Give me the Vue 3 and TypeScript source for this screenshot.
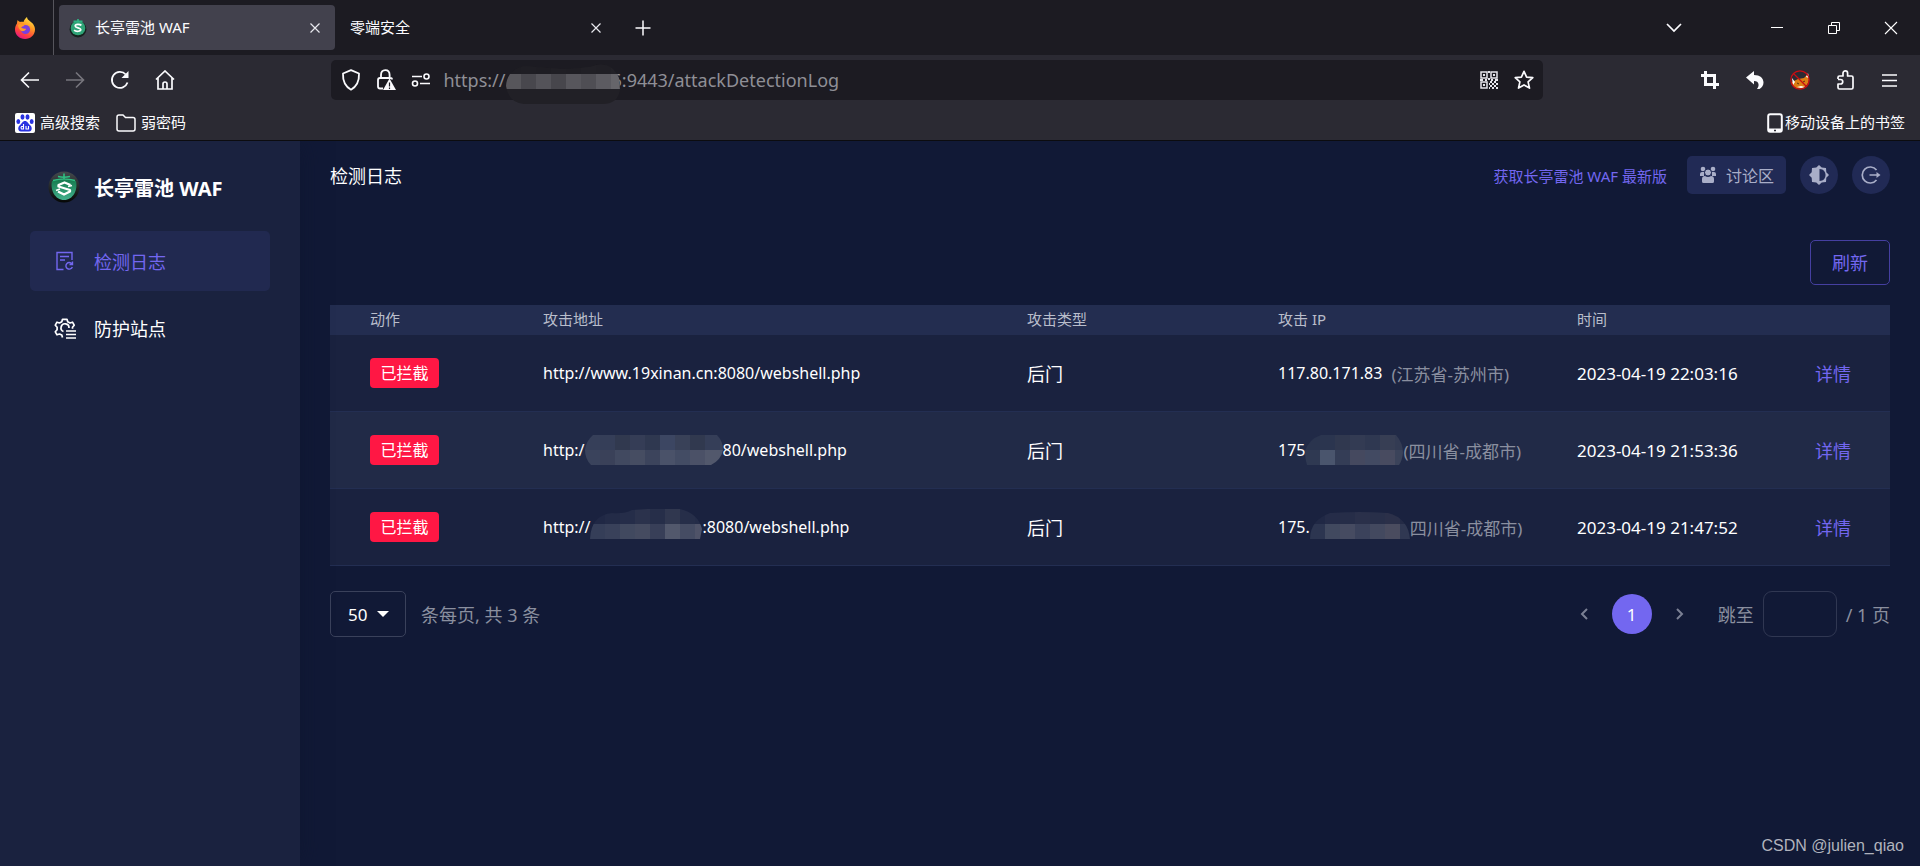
<script setup lang="ts">
import { ref } from 'vue'

interface Mosaic {
  width: number
  height: number
  clip: string
  split: number
  upper: string[]
  lower: string[]
}

interface LogRow {
  id: number
  urlHead: string
  urlMask?: Mosaic
  urlTail: string
  kind: string
  ipHead: string
  ipMask?: Mosaic
  region: string
  time: string
}

const addressMask: Mosaic = {
  width: 114, height: 40, split: 10,
  clip: 'M0 22 Q1 6 18 2 L56 5 Q84 4 90 1 Q106 -2 113 14 L114 26 Q112 40 96 40 H18 Q2 38 0 22Z',
  upper: ['#1e1d23', '#1f1e24', '#1e1d23', '#201f25', '#1f1e24', '#212026', '#201f25', '#222127'],
  lower: ['#57565b', '#48474d', '#545359', '#47464c', '#57565c', '#4f4e54', '#5c5b61', '#66656a'],
}

const rows: LogRow[] = [
  {
    id: 1,
    urlHead: 'http://www.19xinan.cn:8080/webshell.php',
    urlTail: '',
    kind: '后门',
    ipHead: '117.80.171.83',
    region: '(江苏省-苏州市)',
    time: '2023-04-19 22:03:16',
  },
  {
    id: 2,
    urlHead: 'http:/',
    urlMask: {
      width: 138, height: 30, split: 15,
      clip: 'M8 0 H132 Q138 6 138 15 Q136 25 126 30 H6 Q0 24 0 15 Q1 6 8 0Z',
      upper: ['#363f59', '#353e58', '#31394f', '#353d56', '#2f3850', '#3c4662', '#394158', '#31394f', '#353e58', '#3a4259'],
      lower: ['#3a435c', '#3a4159', '#414960', '#464d62', '#3c445c', '#4a5269', '#434c64', '#4b5167', '#52586c', '#4e566c'],
    },
    urlTail: '80/webshell.php',
    kind: '后门',
    ipHead: '175',
    ipMask: {
      width: 98, height: 30, split: 15,
      clip: 'M16 0 H91 Q98 8 98 18 Q97 26 94 30 H2 Q0 24 0 16 Q4 4 16 0Z',
      upper: ['#2a344e', '#2b354f', '#30384f', '#333b53', '#2f3851', '#373e54', '#333b53'],
      lower: ['#2f3952', '#4a556d', '#343d56', '#45495f', '#424a62', '#484b60', '#3b435a'],
    },
    region: '(四川省-成都市)',
    time: '2023-04-19 21:53:36',
  },
  {
    id: 3,
    urlHead: 'http://',
    urlMask: {
      width: 112, height: 36, split: 15,
      clip: 'M0 30 Q1 6 22 4 Q34 5 42 1 Q66 -1 90 0 Q108 4 112 20 L110 30Z',
      upper: ['#202845', '#232b47', '#252d49', '#2b324c', '#262e49', '#30374f', '#262e49', '#242c48'],
      lower: ['#353e58', '#39415a', '#41495f', '#454b60', '#383f58', '#52586c', '#454c63', '#4f5368'],
    },
    urlTail: ':8080/webshell.php',
    kind: '后门',
    ipHead: '175.',
    ipMask: {
      width: 100, height: 30, split: 12,
      clip: 'M0 27 Q0 8 20 1 Q50 -1 78 1 Q98 6 100 27Z',
      upper: ['#202845', '#252c48', '#262d48', '#2a304a', '#282f49', '#2b3049', '#242b46'],
      lower: ['#2c3550', '#41495f', '#464b61', '#3b425b', '#43495f', '#4a4c5f', '#303852'],
    },
    region: '四川省-成都市)',
    time: '2023-04-19 21:47:52',
  },
]

const address = ref('')
const pageSize = ref('50')
const jump = ref('')
</script>

<template>
  <div class="window">
    <header class="browser">
      <div class="tabs">
        <div class="brand">
          <svg width="22" height="22" viewBox="0 0 22 22">
            <defs>
              <linearGradient id="fx" x1="0.8" y1="0" x2="0.3" y2="1">
                <stop offset="0" stop-color="#fff14d" /><stop offset="0.4" stop-color="#ff9a24" />
                <stop offset="0.75" stop-color="#ff4040" /><stop offset="1" stop-color="#e31587" />
              </linearGradient>
            </defs>
            <path d="M13 0c0 2 1.500 3 3 4.200C18.500 6 21 8.500 21 12.500 21 18 16.500 22 11 22S1 18 1 12.500c0-2.500.8-4.500 2-6 0-1.200.2-2.300.7-3.500C4.500 4 5 4.500 6 5c1.200-.4 2.500-.3 3.500 0C10 3 11.500 1 13 0z" fill="url(#fx)" />
            <circle cx="11.500" cy="12.500" r="4.600" fill="#7a3fe0" />
            <path d="M4 8c2-2 5-1 6.500 1-2 0-3 .8-3.500 2 2-.5 2.500 1 5 .8 0 2-3 2.700-4.500 2.200C5.500 13 4 10.500 4 8z" fill="#ff9b2b" />
          </svg>
        </div>
        <div class="tab active">
          <svg class="favicon" width="18" height="20" viewBox="0 0 32 34">
            <circle cx="16" cy="19" r="15" fill="#16211e" /><circle cx="16" cy="17" r="13" fill="#2fa377" />
            <path d="M8 5h16M16 1v6" stroke="#2fb583" stroke-width="3" />
            <path d="M22 12.500c-3-3-11-2.500-11 .8s10 3.500 10 6.500-8 4.500-12 1" fill="none" stroke="#fff" stroke-width="3" />
          </svg>
          <span class="tab-title">长亭雷池 WAF</span>
          <button class="tab-close" aria-label="关闭标签页"><svg width="10" height="10" viewBox="0 0 10 10"><path d="M.5.5l9 9m0-9l-9 9" stroke="#e8e8ee" stroke-width="1.200" /></svg></button>
        </div>
        <div class="tab">
          <span class="tab-title">零端安全</span>
          <button class="tab-close" aria-label="关闭标签页"><svg width="10" height="10" viewBox="0 0 10 10"><path d="M.5.5l9 9m0-9l-9 9" stroke="#e8e8ee" stroke-width="1.200" /></svg></button>
        </div>
        <button class="new-tab" aria-label="新标签页"><svg width="16" height="16" viewBox="0 0 16 16"><path d="M8 .5v15M.5 8h15" stroke="#fbfbfe" stroke-width="1.500" /></svg></button>
        <div class="window-controls">
          <button class="list-tabs" aria-label="列出标签页"><svg width="16" height="10" viewBox="0 0 16 10"><path d="M1 1l7 7 7-7" fill="none" stroke="#fbfbfe" stroke-width="1.700" /></svg></button>
          <button aria-label="最小化"><svg width="12" height="12" viewBox="0 0 12 12"><path d="M0 5.500h12" stroke="#fff" /></svg></button>
          <button aria-label="还原"><svg width="12" height="12" viewBox="0 0 12 12"><path d="M.5 3.500h8v8h-8zM3.500 3V.5h8v8H9" fill="none" stroke="#fff" /></svg></button>
          <button aria-label="关闭"><svg width="14" height="14" viewBox="0 0 14 14"><path d="M1 1l12 12m0-12L1 13" stroke="#fff" stroke-width="1.100" /></svg></button>
        </div>
      </div>

      <div class="toolbar">
        <button class="tool" aria-label="后退"><svg width="20" height="18" viewBox="0 0 20 18"><path d="M19 9H2M9 1.500L1.500 9 9 16.500" fill="none" stroke="#fbfbfe" stroke-width="1.600" /></svg></button>
        <button class="tool" aria-label="前进"><svg width="20" height="18" viewBox="0 0 20 18"><path d="M1 9h17M11 1.500L18.500 9 11 16.500" fill="none" stroke="#77767d" stroke-width="1.600" /></svg></button>
        <button class="tool" aria-label="刷新页面"><svg width="20" height="20" viewBox="0 0 20 20"><path d="M17.500 12.500A8 8 0 1 1 15.800 4.500" fill="none" stroke="#fbfbfe" stroke-width="1.800" /><path d="M18.500 1v7h-7z" fill="#fbfbfe" /></svg></button>
        <button class="tool" aria-label="主页"><svg width="20" height="20" viewBox="0 0 20 20"><path d="M1 9.500L10 1l9 8.500M3 8v11h14V8M8 19v-5q0-2 2-2t2 2v5" fill="none" stroke="#fbfbfe" stroke-width="1.700" /></svg></button>
        <div class="spacer"></div>
        <div class="address">
          <div class="address-icons">
            <svg width="20" height="22" viewBox="0 0 20 22"><path d="M10 1.200l8 3.300c.3 7-1.500 12.500-8 16.200C3.500 17 1.700 11.500 2 4.500z" fill="none" stroke="#fbfbfe" stroke-width="1.800" stroke-linejoin="round" /></svg>
            <svg width="20" height="22" viewBox="0 0 20 22"><path d="M5 9V6q0-4.800 4.300-4.800T13.600 6v3M7 19.500H4q-2 0-2-2V11q0-2 2-2h10q2 0 2 1.500" fill="none" stroke="#fbfbfe" stroke-width="1.800" /><path d="M13.500 9.500L20 21H7z" fill="#fbfbfe" /><path d="M13.500 13.500v4m0 1v1.500" stroke="#1c1b22" stroke-width="1.200" /></svg>
            <svg width="20" height="14" viewBox="0 0 20 14"><path d="M1 3.500h10M9 10.500h10" stroke="#fbfbfe" stroke-width="1.700" /><circle cx="15.500" cy="3.500" r="2.500" fill="none" stroke="#fbfbfe" stroke-width="1.600" /><circle cx="4" cy="10.500" r="2.500" fill="none" stroke="#fbfbfe" stroke-width="1.600" /></svg>
          </div>
          <div class="address-text">
            <span>https://</span>
            <svg class="address-mask" :width="addressMask.width" :height="addressMask.height">
              <clipPath id="mask-address"><path :d="addressMask.clip" /></clipPath>
              <g clip-path="url(#mask-address)">
                <rect width="114" height="40" fill="#212026" />
                <rect v-for="(c, i) in addressMask.upper" :key="'u' + i" :x="i * 15" y="0" width="15" :height="addressMask.split" :fill="c" />
                <rect v-for="(c, i) in addressMask.lower" :key="'l' + i" :x="i * 15" :y="addressMask.split" width="15" height="15" :fill="c" />
              </g>
            </svg>
            <span class="address-tail">6:9443/attackDetectionLog</span>
            <input v-model="address" class="address-input" aria-label="地址" />
          </div>
          <svg width="18" height="18" viewBox="0 0 18 18" fill="none" stroke="#e4e4ea" stroke-width="1.500"><path d="M1 1h6v6H1zM11 1h6v6h-6zM1 11h6v6H1z" /><path d="M3 4h2M13 4h2M3 14h2M9 0v2M8 8h2M0 9h3M5 9h2M11 9h2M15 9h3M10 11h2M14 11h2M9 13h1M12 13h2M16 13h2M10 15h2M14 15h2M9 17h1M12 17h2M16 17h2" stroke-width="2" /></svg>
          <svg width="20" height="20" viewBox="0 0 20 20"><path d="M10 1.300l2.600 5.800 6.200.6-4.700 4.200 1.400 6.200L10 14.900l-5.500 3.200 1.400-6.200L1.200 7.700l6.200-.6z" fill="none" stroke="#fbfbfe" stroke-width="1.700" stroke-linejoin="round" /></svg>
        </div>
        <div class="spacer"></div>
        <button class="tool" aria-label="截图"><svg width="18" height="18" viewBox="0 0 18 18"><path d="M4.500 0v13.500H18M0 4.500h13.500V18" fill="none" stroke="#fbfbfe" stroke-width="3" /></svg></button>
        <button class="tool" aria-label="撤销"><svg width="18" height="18" viewBox="0 0 18 18"><path d="M0 6.500L8 0v4c6 0 9.500 3 9.500 7.500 0 3-1.500 5-4 6.500H11c2.500-3 2.500-8-3-8v3.500z" fill="#fbfbfe" /></svg></button>
        <button class="tool" aria-label="扩展已停用"><svg width="20" height="20" viewBox="0 0 20 20"><path d="M2 12c0 4 3 6.500 8 6.500s9-4 9-11.500l-1-3-4 4-6 1z" fill="#dd7d14" /><path d="M2 8l3 4-2 3zM18 3l1 5-3-1zM7 17l4-1 4 1-4 1z" fill="#fff" /><path d="M7 13l2 1m4-2l2-1" stroke="#5b3210" /><circle cx="10" cy="10" r="9.200" fill="none" stroke="#c80d13" stroke-width="1.300" /><path d="M3.500 3.500l13 13" stroke="#c80d13" stroke-width="1.300" /></svg></button>
        <button class="tool" aria-label="扩展"><svg width="20" height="20" viewBox="0 0 20 20"><path d="M3 9V7.500Q3 6 4.500 6H8V3.200a2.300 2.300 0 0 1 4.600 0V6h3.900Q18 6 18 7.500v10q0 1.500-1.500 1.500h-12Q3 19 3 17.500V14h2.500a2 2 0 0 0 0-4.500H3" fill="none" stroke="#fbfbfe" stroke-width="1.700" stroke-linejoin="round" /></svg></button>
        <button class="tool" aria-label="菜单"><svg width="15" height="13" viewBox="0 0 15 13"><path d="M0 1h15M0 6.500h15M0 12h15" stroke="#fbfbfe" stroke-width="1.400" /></svg></button>
      </div>

      <nav class="bookmarks">
        <a href="#" class="bookmark">
          <svg width="20" height="20" viewBox="0 0 20 20"><rect width="20" height="20" rx="2" fill="#fff" /><g fill="#2932e1"><ellipse cx="7.500" cy="4" rx="2" ry="2.700" /><ellipse cx="12.500" cy="4" rx="2" ry="2.700" /><ellipse cx="3.300" cy="8.500" rx="1.900" ry="2.500" /><ellipse cx="16.700" cy="8.500" rx="1.900" ry="2.500" /><path d="M10 8c2.500 0 3 2.500 5 4s3 6-1 6.500H6c-4-.5-3-5-1-6.500s2.500-4 5-4z" /></g><path d="M8.500 11v5H6.500q-1-1.200 0-2.500h2M11 13v3h2.500v-3" fill="none" stroke="#fff" stroke-width="1.100" /></svg>
          <span>高级搜索</span>
        </a>
        <a href="#" class="bookmark">
          <svg width="20" height="18" viewBox="0 0 20 18"><path d="M1 3q0-2 2-2h4l2.500 2.500H17q2 0 2 2V15q0 2-2 2H3q-2 0-2-2z" fill="none" stroke="#fbfbfe" stroke-width="1.500" /></svg>
          <span>弱密码</span>
        </a>
        <a href="#" class="bookmark mobile">
          <svg width="16" height="20" viewBox="0 0 16 20"><rect x="1.200" y="1.200" width="13.600" height="17.600" rx="2" fill="none" stroke="#fbfbfe" stroke-width="2" /><path d="M2 17h12" stroke="#fbfbfe" stroke-width="3" /><path d="M7 17.500h2" stroke="#2b2a33" stroke-width="1.500" /></svg>
          <span>移动设备上的书签</span>
        </a>
      </nav>
    </header>

    <div class="app">
      <aside class="sidebar">
        <div class="logo">
          <svg width="32" height="32" viewBox="0 0 32 32">
            <defs>
              <linearGradient id="lg" x1="0" y1="0" x2="0" y2="1"><stop offset="0" stop-color="#444a4d" /><stop offset="1" stop-color="#050706" /></linearGradient>
              <linearGradient id="lg2" x1="0" y1="0" x2="0" y2="1"><stop offset="0" stop-color="#167a4d" /><stop offset="1" stop-color="#42b08d" /></linearGradient>
            </defs>
            <circle cx="16" cy="16" r="15.500" fill="url(#lg)" />
            <path d="M4 10q12-3 24 0c2 9-3 19-12 19S2 19 4 10z" fill="url(#lg2)" />
            <path d="M10 5.500q6 1.500 12 0M16 2.500v6M5 9.500q11-3 22 0" fill="none" stroke="#2fc183" stroke-width="1.600" />
            <path d="M22.500 14l-6-2.500-6 2.500v1.500l11.500 3.500v1.500l-6 3-6-3" fill="none" stroke="#fff" stroke-width="2.300" stroke-linejoin="round" />
            <path d="M12 18l-4 1.500M20 15.500l4-1" stroke="#fff" stroke-width="1.500" />
          </svg>
          <strong>长亭雷池 WAF</strong>
        </div>
        <nav class="menu">
          <a href="#" class="menu-item current">
            <svg width="22" height="22" viewBox="0 0 22 22" fill="none" stroke="#7367f0" stroke-width="1.400"><path d="M9.500 19.500H3v-17h15v7.500M6 6.500h9M6 10h5" /><path d="M17.800 13.800a3.300 3.300 0 1 0 .5 3.200M18.500 11.500v3h-3" /></svg>
            <span>检测日志</span>
          </a>
          <a href="#" class="menu-item">
            <svg width="22" height="22" viewBox="0 0 22 22" fill="none" stroke="#fff" stroke-width="1.700"><path d="M8.500 20.500L7.800 18 5.500 17l-2.500.8-1.700-3 1.800-2v-2.600l-1.800-2 1.700-3 2.500.8 2.300-1.200.7-2.500h4.500l.7 2.500L16 6l2.500-.8 1.700 3-1.700 2v1.500" stroke-linejoin="round" /><path d="M9.500 14.500A4 4 0 1 1 15 11" /><path d="M12 14h10M12 17.500h10M12 21h10" /></svg>
            <span>防护站点</span>
          </a>
        </nav>
      </aside>

      <main class="content">
        <div class="topbar">
          <h1>检测日志</h1>
          <a href="#" class="latest">获取长亭雷池 WAF 最新版</a>
          <button class="forum">
            <svg width="18" height="18" viewBox="0 0 18 18" fill="#a9aec8"><circle cx="4" cy="3" r="2.300" /><circle cx="14" cy="3" r="2.300" /><path d="M1 10V8q0-2 2-2h2v4zM17 10V8q0-2-2-2h-2v4z" /><circle cx="9" cy="6.500" r="3.500" stroke="#212a55" /><path d="M3 15.500V13q0-3 3-3 3 2 6 0 3 0 3 3v2.500q0 1.500-1.500 1.500h-9Q3 17 3 15.500z" /></svg>
            <span>讨论区</span>
          </button>
          <button class="round" aria-label="切换主题"><svg width="20" height="20" viewBox="0 0 20 20"><path d="M10 0l2.700 2.500 4.300.5.300 4.200L20 10l-2.700 2.800-.3 4.200-4.300.5L10 20l-2.700-2.500L3 17l-.3-4.200L0 10l2.700-2.800L3 3l4.300-.5z" fill="#a9aec8" /><path d="M10.500 4c8 0 8 12 0 12z" fill="#212a55" /></svg></button>
          <button class="round" aria-label="退出登录"><svg width="20" height="20" viewBox="0 0 20 20"><path d="M15.500 5A8 8 0 1 0 15.500 15M8.500 10H17" fill="none" stroke="#a9aec8" stroke-width="1.700" /><path d="M15.500 7l4 3-4 3z" fill="#a9aec8" /></svg></button>
        </div>

        <div class="actions"><button class="refresh">刷新</button></div>

        <table class="log">
          <colgroup><col class="c-action" /><col /><col class="c-kind" /><col class="c-ip" /><col class="c-time" /><col class="c-detail" /></colgroup>
          <thead>
            <tr><th>动作</th><th>攻击地址</th><th>攻击类型</th><th>攻击 IP</th><th>时间</th><th></th></tr>
          </thead>
          <tbody>
            <tr v-for="row in rows" :key="row.id">
              <td><span class="badge">已拦截</span></td>
              <td>
                <div class="latin">
                  <span>{{ row.urlHead }}</span>
                  <svg v-if="row.urlMask" :width="row.urlMask.width" :height="row.urlMask.height">
                    <clipPath :id="'mask-url-' + row.id"><path :d="row.urlMask.clip" /></clipPath>
                    <g :clip-path="`url(#mask-url-${row.id})`">
                      <rect v-for="(c, i) in row.urlMask.upper" :key="'u' + i" :x="i * 15" y="0" width="15" :height="row.urlMask.split" :fill="c" />
                      <rect v-for="(c, i) in row.urlMask.lower" :key="'l' + i" :x="i * 15" :y="row.urlMask.split" width="15" height="15" :fill="c" />
                    </g>
                  </svg>
                  <span>{{ row.urlTail }}</span>
                </div>
              </td>
              <td>{{ row.kind }}</td>
              <td>
                <div class="latin">
                  <span>{{ row.ipHead }}</span>
                  <svg v-if="row.ipMask" :width="row.ipMask.width" :height="row.ipMask.height">
                    <clipPath :id="'mask-ip-' + row.id"><path :d="row.ipMask.clip" /></clipPath>
                    <g :clip-path="`url(#mask-ip-${row.id})`">
                      <rect v-for="(c, i) in row.ipMask.upper" :key="'u' + i" :x="i * 15" y="0" width="15" :height="row.ipMask.split" :fill="c" />
                      <rect v-for="(c, i) in row.ipMask.lower" :key="'l' + i" :x="i * 15" :y="row.ipMask.split" width="15" height="15" :fill="c" />
                    </g>
                  </svg>
                  <span class="region" :class="{ spaced: !row.ipMask }">{{ row.region }}</span>
                </div>
              </td>
              <td class="time">{{ row.time }}</td>
              <td><a href="#" class="detail">详情</a></td>
            </tr>
          </tbody>
        </table>

        <div class="paging">
          <label class="size">
            <select v-model="pageSize" aria-label="每页条数"><option>50</option></select>
            <svg width="12" height="6" viewBox="0 0 12 6"><path d="M0 0h12L6 6z" fill="#fff" /></svg>
          </label>
          <span class="total">条每页, 共 3 条</span>
          <button class="step" aria-label="上一页"><svg width="8" height="12" viewBox="0 0 8 12"><path d="M7 1L2 6l5 5" fill="none" stroke="#7b8094" stroke-width="2" /></svg></button>
          <button class="page">1</button>
          <button class="step" aria-label="下一页"><svg width="8" height="12" viewBox="0 0 8 12"><path d="M1 1l5 5-5 5" fill="none" stroke="#7b8094" stroke-width="2" /></svg></button>
          <label class="jump" for="jump">跳至</label>
          <input id="jump" v-model="jump" class="jump-input" />
          <span>/ 1 页</span>
        </div>
        <div class="watermark">CSDN @julien_qiao</div>
      </main>
    </div>
  </div>
</template>

<style>
body {
  margin: 0;
  background: #111936;
}
</style>

<style scoped>
* {
  box-sizing: border-box;
}
.window {
  display: flex;
  flex-direction: column;
  min-height: 100vh;
  font-family: "Noto Sans", "Noto Sans CJK SC", sans-serif;
  color: #fff;
}
button {
  border: 0;
  padding: 0;
  background: none;
  color: inherit;
  font: inherit;
  display: flex;
  align-items: center;
  justify-content: center;
}
a {
  color: inherit;
  text-decoration: none;
}
svg {
  flex: none;
}
.browser {
  position: relative;
  z-index: 2;
  background: #2b2a33;
  border-bottom: 1px solid #0c0c0f;
  font-size: 15px;
  line-height: 20px;
  color: #fbfbfe;
}
.tabs {
  display: flex;
  align-items: center;
  height: 55px;
  background: #1c1b22;
}
.brand {
  display: flex;
  align-items: center;
  justify-content: center;
  width: 54px;
  height: 55px;
  padding-right: 3px;
  border-right: 1px solid #56555c;
}
.tab {
  display: flex;
  align-items: center;
  width: 276px;
  height: 45px;
  margin-left: 5px;
  padding: 0 15px 0 10px;
  border-radius: 4px;
}
.tab.active {
  background: #42414d;
}
.favicon {
  margin-right: 8px;
}
.tab-title {
  flex: 1;
  padding-bottom: 2px;
  font-size: 15px;
}
.new-tab {
  width: 40px;
  height: 40px;
  margin-left: 7px;
}
.window-controls {
  display: flex;
  margin-left: auto;
  padding-right: 1px;
}
.window-controls button {
  width: 57px;
  height: 53px;
}
.window-controls .list-tabs {
  margin-right: 46px;
}
.toolbar {
  display: flex;
  align-items: center;
  height: 50px;
  padding: 0 8px 0 7px;
}
.tool {
  width: 45px;
  height: 40px;
}
.spacer {
  flex: 8;
}
.address {
  display: flex;
  flex: 66;
  align-items: center;
  gap: 16px;
  height: 40px;
  padding: 0 9px 0 10px;
  border-radius: 5px;
  background: #1c1b22;
}
.address-icons {
  display: flex;
  align-items: center;
  gap: 15px;
}
.address-text {
  display: flex;
  flex: 1;
  align-items: flex-start;
  height: 32px;
  margin-left: -4px;
  font-size: 18px;
  line-height: 32px;
  color: #8f8f96;
}
.address-mask {
  position: relative;
}
.address-tail {
  margin-left: -8px;
}
.address-input {
  flex: 1;
  min-width: 0;
  height: 32px;
  border: 0;
  background: none;
  color: inherit;
  outline: none;
}
.bookmarks {
  display: flex;
  align-items: center;
  gap: 16px;
  height: 35px;
  padding: 0 15px;
}
.bookmark {
  display: flex;
  align-items: center;
  gap: 5px;
}
.bookmark span {
  padding-bottom: 2px;
}
.mobile {
  gap: 2px;
  margin-left: auto;
}
.app {
  display: flex;
  flex: 1;
}
.sidebar {
  position: relative;
  z-index: 1;
  width: 300px;
  padding: 29px 30px;
  background: #1a223f;
  box-shadow: 0 0 24px #0f1731;
}
.logo {
  display: flex;
  align-items: center;
  gap: 14px;
  height: 34px;
  padding-left: 18px;
  font-size: 20px;
}
.menu {
  margin-top: 27px;
}
.menu-item {
  display: flex;
  align-items: center;
  gap: 18px;
  height: 60px;
  margin-bottom: 7px;
  padding-left: 24px;
  border-radius: 5px;
  font-size: 18px;
}
.current {
  background: #212950;
  color: #7367f0;
}
.content {
  display: flex;
  flex: 1;
  flex-direction: column;
  padding: 15px 30px 7px;
  background: #111936;
}
.topbar {
  display: flex;
  align-items: center;
  gap: 14px;
  height: 38px;
}
h1 {
  flex: 1;
  margin: 0;
  font-size: 18px;
  font-weight: 400;
}
.latest {
  margin-right: 6px;
  font-size: 15px;
  color: #7367f0;
}
.forum {
  gap: 9px;
  width: 99px;
  height: 38px;
  border-radius: 5px;
  background: #212a55;
  color: #a9aec8;
  font-size: 16px;
}
.round {
  width: 38px;
  height: 38px;
  border-radius: 50%;
  background: #212a55;
}
.actions {
  display: flex;
  justify-content: flex-end;
  margin: 46px 0 20px;
}
.refresh {
  width: 80px;
  height: 45px;
  padding-bottom: 1px;
  border: 1px solid #453fa0;
  border-radius: 5px;
  color: #7367f0;
  font-size: 18px;
}
.log {
  width: 100%;
  border-collapse: separate;
  border-spacing: 0;
  table-layout: fixed;
}
.c-action {
  width: 213px;
}
.c-kind {
  width: 251px;
}
.c-ip {
  width: 299px;
}
.c-time {
  width: 238px;
}
.c-detail {
  width: 75px;
}
th {
  height: 30px;
  padding: 0 0 2px;
  background: #232d50;
  color: #b9bdcb;
  font-size: 15px;
  font-weight: 400;
  line-height: 20px;
  text-align: left;
}
td {
  height: 77px;
  padding: 0;
  border-bottom: 1px solid #232e52;
  background: #1a223f;
  font-size: 18px;
  white-space: nowrap;
}
tr:nth-child(even) td {
  background: #212a47;
}
th:first-child,
td:first-child {
  padding-left: 40px;
}
.badge {
  display: inline-block;
  width: 69px;
  height: 30px;
  border-radius: 4px;
  background: #ff1744;
  font-size: 16px;
  line-height: 30px;
  text-align: center;
  vertical-align: middle;
}
.latin {
  display: flex;
  align-items: center;
  font-size: 16px;
}
.region {
  color: #8a8f9f;
  font-size: 17px;
}
.spaced {
  margin-left: 9px;
}
.time {
  font-size: 17px;
}
.detail {
  color: #7367f0;
}
.paging {
  display: flex;
  align-items: center;
  height: 46px;
  margin-top: 25px;
  color: #8a8f9f;
  font-size: 18px;
}
.size {
  position: relative;
  width: 76px;
  height: 46px;
  margin-right: 15px;
}
.size select {
  width: 100%;
  height: 100%;
  padding: 0 0 0 17px;
  border: 1px solid #3a415b;
  border-radius: 5px;
  appearance: none;
  background: none;
  color: #fff;
  font: inherit;
  font-size: 17px;
}
.size svg {
  position: absolute;
  top: 20px;
  right: 17px;
  pointer-events: none;
}
.total {
  flex: 1;
}
.step {
  width: 24px;
  height: 40px;
  margin: 0 16px;
}
.page {
  width: 40px;
  height: 40px;
  border-radius: 50%;
  background: #7367f0;
  color: #fff;
  font-size: 17px;
}
.jump {
  margin: 0 9px 0 10px;
}
.jump-input {
  width: 74px;
  height: 46px;
  margin-right: 9px;
  padding: 0 10px;
  border: 1px solid #303752;
  border-radius: 9px;
  background: none;
  color: #fff;
  font: inherit;
}
.watermark {
  align-self: flex-end;
  margin: auto -14px 0 0;
  font-family: "Liberation Sans", sans-serif;
  font-size: 16px;
  line-height: 26px;
  color: #b0b3bd;
}
</style>
